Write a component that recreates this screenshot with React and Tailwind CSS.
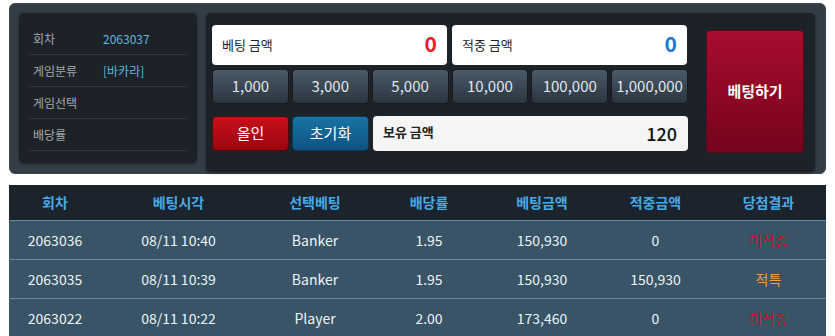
import React from "react";

const font = { fontFamily: '"Noto Sans CJK KR", "Noto Sans", sans-serif' };

const chips = ["1,000", "3,000", "5,000", "10,000", "100,000", "1,000,000"];

const rows = [
  ["2063036", "08/11 10:40", "Banker", "1.95", "150,930", "0", "미적중", "text-[#c8102e]"],
  ["2063035", "08/11 10:39", "Banker", "1.95", "150,930", "150,930", "적특", "text-[#e9a23b]"],
  ["2063022", "08/11 10:22", "Player", "2.00", "173,460", "0", "미적중", "text-[#c8102e]"],
];

const cols = "grid grid-cols-[92px_155px_118px_110px_116px_111px_115px]";

export default function App() {
  return (
    <div className="w-[835px] h-[336px] bg-white overflow-hidden" style={font}>
      <div className="ml-[9px] mt-[3px] w-[817px] h-[171px] rounded-[6px] bg-[#333d45] border border-[#3b464e] flex pt-[9px] pl-[9px] gap-[9px]">
        {/* left info */}
        <div className="w-[178px] h-[150px] rounded-[5px] bg-[#1c2227] pt-[10px] px-[10px] shadow-[0_1px_3px_rgba(0,0,0,0.4)]">
          {[
            ["회차", "2063037"],
            ["게임분류", "[바카라]"],
            ["게임선택", ""],
            ["배당률", ""],
          ].map(([k, v], i) => (
            <div key={i} className="h-[32px] flex items-center border-b border-[#2f363c] pl-[4px] text-[12px]">
              <span className="w-[70px] text-[#a3a9ae]">{k}</span>
              <span className="text-[#5fb8df]">{v}</span>
            </div>
          ))}
        </div>
        {/* right */}
        <div className="w-[609px] h-[159px] rounded-[5px] bg-[#1c2227] pt-[12px] pl-[6px] flex shadow-[0_1px_3px_rgba(0,0,0,0.4)]">
          <div className="w-[476px] flex flex-col">
            <div className="flex gap-[5px] h-[40px]">
              <div className="w-[235px] bg-white rounded-[4px] flex items-center justify-between px-[10px]">
                <span className="text-[13px] text-[#222]">베팅 금액</span>
                <span className="text-[21px] font-bold text-[#e8202a] leading-none pb-[4px]">0</span>
              </div>
              <div className="w-[235px] bg-white rounded-[4px] flex items-center justify-between px-[10px]">
                <span className="text-[13px] text-[#222]">적중 금액</span>
                <span className="text-[21px] font-bold text-[#1e78d8] leading-none pb-[4px]">0</span>
              </div>
            </div>
            <div className="grid grid-cols-6 gap-[3px] h-[35px] mt-[4px]">
              {chips.map((c) => (
                <div
                  key={c}
                  className="rounded-[4px] border border-[#161b1f] bg-gradient-to-b from-[#4b5b69] to-[#2a3540] flex items-center justify-center text-[15px] text-[#e2e6ea]"
                >
                  {c}
                </div>
              ))}
            </div>
            <div className="flex gap-[3px] h-[35px] mt-[12px]">
              <div className="w-[77px] rounded-[4px] border border-[#4a0a0c] bg-gradient-to-b from-[#c8111b] to-[#98060e] flex items-center justify-center text-[15px] text-white">
                올인
              </div>
              <div className="w-[77px] rounded-[4px] border border-[#0b3550] bg-gradient-to-b from-[#1a74a6] to-[#0e5381] flex items-center justify-center text-[15px] text-white">
                초기화
              </div>
              <div className="w-[315px] ml-[1px] rounded-[4px] bg-[#f5f5f5] flex items-center justify-between pl-[10px] pr-[11px]">
                <span className="text-[13px] font-bold text-[#222] self-start pt-[6px]">보유 금액</span>
                <span className="text-[18px] font-medium text-[#111]">120</span>
              </div>
            </div>
          </div>
          <div className="ml-[18px] mt-[5px] w-[98px] h-[123px] rounded-[4px] border border-[#5c0718] bg-gradient-to-b from-[#a80d2e] to-[#76041c] flex items-center justify-center text-[15px] font-bold text-white">
            베팅하기
          </div>
        </div>
      </div>

      {/* table */}
      <div className="ml-[9px] mt-[11px] w-[817px]">
        <div className={`${cols} h-[35px] bg-[#1b242c] items-center text-[14px] font-bold text-[#4aa9e4] text-center`}>
          <div>회차</div>
          <div>베팅시각</div>
          <div>선택베팅</div>
          <div>배당률</div>
          <div>베팅금액</div>
          <div>적중금액</div>
          <div>당첨결과</div>
        </div>
        {rows.map((r, i) => (
          <div
            key={i}
            className={`${cols} h-[39px] bg-[#395466] border-t border-[#6489a2] items-center text-[14px] text-[#eef2f5] text-center`}
          >
            <div>{r[0]}</div>
            <div>{r[1]}</div>
            <div>{r[2]}</div>
            <div>{r[3]}</div>
            <div>{r[4]}</div>
            <div>{r[5]}</div>
            <div className={r[7]}>{r[6]}</div>
          </div>
        ))}
      </div>
    </div>
  );
}
